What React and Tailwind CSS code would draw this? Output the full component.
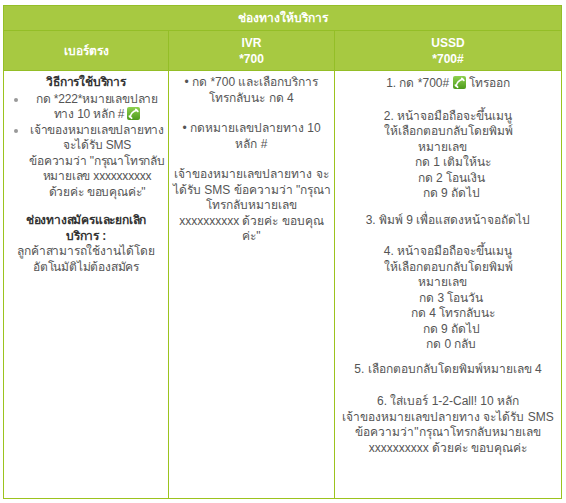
import React from 'react';

// small green handset badge used inline after the dial codes
const CallIcon = () => (
  <svg width="13" height="13" viewBox="0 0 13 13" className="inline-block align-[-2px]">
    <defs>
      <linearGradient id="cg" x1="0" y1="0" x2="0" y2="1">
        <stop offset="0" stopColor="#8fd14f" />
        <stop offset="1" stopColor="#4e9a1c" />
      </linearGradient>
    </defs>
    <rect width="13" height="13" rx="2" fill="url(#cg)" />
    <path d="M3.2 10.2 C3.6 7 6 4.2 9.8 3.2" stroke="#fff" strokeWidth="1.6" fill="none" strokeLinecap="round" />
    <path d="M2.4 9.2 L4.6 11.2" stroke="#fff" strokeWidth="1.8" strokeLinecap="round" />
    <path d="M8.8 2.4 L10.8 4.4" stroke="#fff" strokeWidth="1.8" strokeLinecap="round" />
  </svg>
);

const font = { fontFamily: '"Liberation Sans", Arial, sans-serif' };

export default function App() {
  return (
    <div className="bg-white w-[566px] h-[503px] pt-[5px] pl-[3px]" style={font}>
      <table className="w-[559px] border-collapse table-fixed text-[12px]">
        <colgroup>
          <col className="w-[165px]" />
          <col className="w-[166px]" />
          <col />
        </colgroup>
        <thead>
          <tr>
            <th
              colSpan={3}
              className="h-[25px] bg-[#a7c941] text-white font-bold border border-[#94be27] p-0"
            >
              ช่องทางให้บริการ
            </th>
          </tr>
          <tr className="bg-[#a7c941] text-white font-bold leading-[16px]">
            <th className="h-[40px] border border-[#94be27] p-0">เบอร์ตรง</th>
            <th className="h-[40px] border border-[#94be27] p-0">
              IVR
              <br />
              *700
            </th>
            <th className="h-[40px] border border-[#94be27] p-0">
              USSD
              <br />
              *700#
            </th>
          </tr>
        </thead>
        <tbody className="text-[#555] leading-[15.5px] text-center whitespace-nowrap">
          <tr className="h-[428px]">
            <td className="align-top border border-[#9cc31e] pt-[4px] px-[2px] tracking-[-0.2px]">
              <div className="font-bold text-[#333]">วิธีการใช้บริการ</div>
              <ul className="list-disc pl-[22px] marker:text-[#999] mt-[1px]">
                <li>
                  กด *222*หมายเลขปลาย
                  <br />
                  ทาง 10 หลัก # <CallIcon />
                </li>
                <li>
                  เจ้าของหมายเลขปลายทาง
                  <br />
                  จะได้รับ SMS
                  <br />
                  ข้อความว่า "กรุณาโทรกลับ
                  <br />
                  หมายเลข xxxxxxxxxx
                  <br />
                  ด้วยค่ะ ขอบคุณค่ะ"
                </li>
              </ul>
              <div className="font-bold text-[#333] mt-[13px]">
                ช่องทางสมัครและยกเลิก
                <br />
                บริการ :
              </div>
              <div>
                ลูกค้าสามารถใช้งานได้โดย
                <br />
                อัตโนมัติไม่ต้องสมัคร
              </div>
            </td>
            <td className="align-top border border-[#9cc31e] pt-[4px] px-[4px]">
              <div>
                • กด *700 และเลือกบริการ
                <br />
                โทรกลับนะ กด 4
              </div>
              <div className="mt-[15px]">
                • กดหมายเลขปลายทาง 10
                <br />
                หลัก #
              </div>
              <div className="mt-[15px]">
                เจ้าของหมายเลขปลายทาง จะ
                <br />
                ได้รับ SMS ข้อความว่า "กรุณา
                <br />
                โทรกลับหมายเลข
                <br />
                xxxxxxxxxx ด้วยค่ะ ขอบคุณ
                <br />
                ค่ะ"
              </div>
            </td>
            <td className="align-top border border-[#9cc31e] pt-[5px] px-[4px]">
              <div>
                1. กด *700# <CallIcon /> โทรออก
              </div>
              <div className="mt-[17px]">
                2. หน้าจอมือถือจะขึ้นเมนู
                <br />
                ให้เลือกตอบกลับโดยพิมพ์
                <br />
                หมายเลข&nbsp;&nbsp;&nbsp;
                <br />
                &nbsp;&nbsp;&nbsp;กด 1 เติมให้นะ
                <br />
                &nbsp;&nbsp;กด 2 โอนเงิน
                <br />
                &nbsp;&nbsp;กด 9 ถัดไป
              </div>
              <div className="mt-[11px]">3. พิมพ์ 9 เพื่อแสดงหน้าจอถัดไป</div>
              <div className="mt-[16px]">
                4. หน้าจอมือถือจะขึ้นเมนู
                <br />
                ให้เลือกตอบกลับโดยพิมพ์
                <br />
                หมายเลข&nbsp;&nbsp;&nbsp;
                <br />
                &nbsp;&nbsp;กด 3 โอนวัน
                <br />
                &nbsp;&nbsp;&nbsp;กด 4 โทรกลับนะ
                <br />
                &nbsp;&nbsp;กด 9 ถัดไป
                <br />
                &nbsp;&nbsp;กด 0 กลับ
              </div>
              <div className="mt-[9px]">5. เลือกตอบกลับโดยพิมพ์หมายเลข 4</div>
              <div className="mt-[17px]">
                6. ใส่เบอร์ 1-2-Call! 10 หลัก
                <br />
                เจ้าของหมายเลขปลายทาง จะได้รับ SMS
                <br />
                ข้อความว่า"กรุณาโทรกลับหมายเลข
                <br />
                xxxxxxxxxx ด้วยค่ะ ขอบคุณค่ะ
              </div>
            </td>
          </tr>
        </tbody>
      </table>
    </div>
  );
}
